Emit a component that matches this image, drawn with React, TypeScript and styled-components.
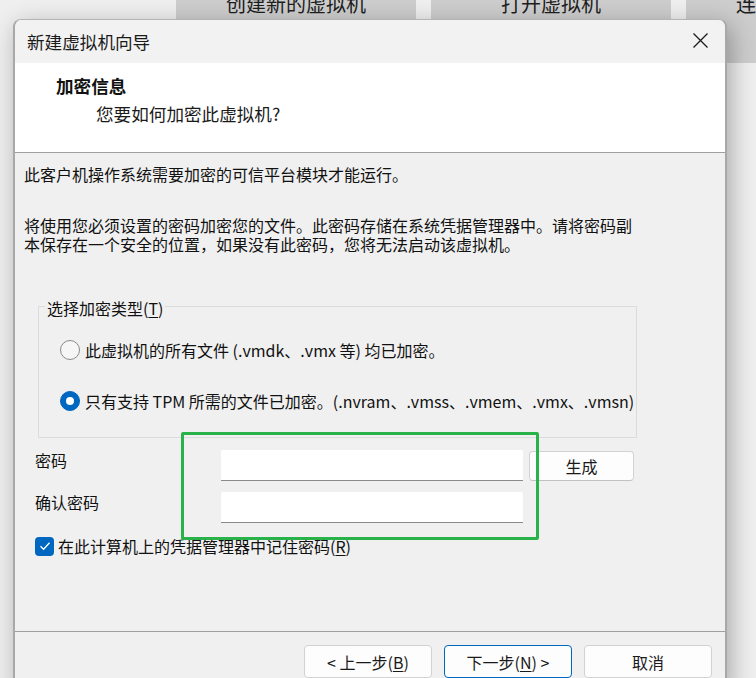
import React from "react";
import styled, { createGlobalStyle } from "styled-components";

const GlobalStyle = createGlobalStyle`
  * { box-sizing: border-box; }
  html, body { margin: 0; padding: 0; }
  body {
    width: 756px;
    height: 678px;
    overflow: hidden;
    background: #efefef;
    font-family: "Noto Sans CJK SC", "Noto Sans", sans-serif;
    color: #1a1a1a;
  }
`;

const Desktop = styled.div`
  position: relative;
  width: 756px;
  height: 678px;
  overflow: hidden;
  background: #efefef;
`;

const LauncherRow = styled.div`
  display: flex;
  gap: 15px;
  padding-left: 176px;
`;

const LauncherButton = styled.div`
  flex: none;
  width: 240px;
  height: 63px;
  background: #cdcdcd;
  text-align: center;
  font-size: 20px;
  line-height: 20px;
  color: #1e1e1e;
  white-space: nowrap;
  overflow: hidden;
`;

const LauncherLabel = styled.span`
  display: block;
  margin-top: -6px;
`;

const Dialog = styled.section`
  position: absolute;
  left: 13px;
  top: 19px;
  width: 714px;
  height: 672px;
  display: flex;
  flex-direction: column;
  background: #f0f0f0;
  border: 1px solid #b4b4b4;
  border-left: 2px solid #a8a8a8;
  border-right: 2px solid #a8a8a8;
  border-radius: 8px 8px 0 0;
  box-shadow: 4px 6px 24px rgba(0, 0, 0, 0.3);
`;

const TitleBar = styled.header`
  flex: none;
  height: 43px;
  display: flex;
  align-items: center;
  justify-content: space-between;
  padding: 0 17px 0 12px;
  background: #f2f2f2;
  border-radius: 7px 7px 0 0;
`;

const TitleText = styled.div`
  font-size: 17.6px;
  line-height: 24px;
  color: #1a1a1a;
`;

const CloseButton = styled.button`
  width: 15px;
  height: 15px;
  padding: 0;
  margin: -3px 0 0;
  border: none;
  background: transparent;
  display: flex;
`;

const PageHeader = styled.div`
  flex: none;
  height: 90px;
  padding: 11px 0 0 41px;
  background: #ffffff;
  border-bottom: 1px solid #a0a0a0;
`;

const PageTitle = styled.div`
  font-size: 17.6px;
  line-height: 24px;
  font-weight: 700;
  color: #111;
`;

const PageSubtitle = styled.div`
  margin-top: 4px;
  padding-left: 40px;
  font-size: 17.6px;
  line-height: 24px;
  color: #1a1a1a;
`;

const Body = styled.div`
  flex: 1;
  padding: 11px 9px 0;
  font-size: 16px;
  color: #111;
`;

const Paragraph = styled.p<{ $gap?: number }>`
  margin: ${(p) => p.$gap ?? 0}px 0 0;
  max-width: 612px;
  line-height: ${(p) => (p.$gap ? 19 : 20)}px;
`;

const GroupBox = styled.fieldset`
  margin: 40px 0 0 14px;
  width: 599px;
  min-width: 0;
  padding: 0 0 26px 6px;
  border: 1px solid #dcdcdc;
`;

const GroupLegend = styled.legend`
  padding: 4px 2px 0;
  line-height: 20px;
`;

const RadioRow = styled.label<{ $first?: boolean }>`
  display: flex;
  align-items: center;
  gap: 5px;
  height: 20px;
  margin: ${(p) => (p.$first ? 22 : 31)}px 0 0 15px;
  white-space: nowrap;
`;

const RadioMark = styled.span<{ $checked?: boolean }>`
  flex: none;
  width: 20px;
  height: 20px;
  border-radius: 50%;
  display: flex;
  align-items: center;
  justify-content: center;
  background: ${(p) => (p.$checked ? "#0067c0" : "#f6f6f6")};
  border: 1px solid ${(p) => (p.$checked ? "#0067c0" : "#8a8a8a")};

  &::after {
    content: "";
    display: ${(p) => (p.$checked ? "block" : "none")};
    width: 8px;
    height: 8px;
    border-radius: 50%;
    background: #ffffff;
  }
`;

const Accel = styled.span`
  text-decoration: underline;
  text-underline-offset: 2px;
`;

const FormGrid = styled.div`
  display: grid;
  grid-template-columns: 180px 302px 105px;
  column-gap: 6px;
  row-gap: 11px;
  margin-top: 12px;
  padding-left: 11px;
  align-items: start;
`;

const FieldLabel = styled.label`
  line-height: 20px;
`;

const TextInput = styled.input`
  width: 302px;
  height: 31px;
  margin: 0;
  padding: 0 8px;
  border: none;
  border-bottom: 1px solid #8a8a8a;
  border-radius: 2px 2px 0 0;
  background: #ffffff;
  outline: none;
`;

const PushButton = styled.button<{ $primary?: boolean; $w?: number; $h?: number }>`
  width: ${(p) => p.$w ?? 128}px;
  height: ${(p) => p.$h ?? 33}px;
  padding: 0;
  background: #fdfdfd;
  border: 1px solid ${(p) => (p.$primary ? "#0067c0" : "#d2d2d2")};
  border-radius: 4px;
  font-family: inherit;
  font-size: 16px;
  line-height: 20px;
  color: #1a1a1a;
  white-space: nowrap;
`;

const GenerateButton = styled(PushButton)`
  margin-top: 1px;
  border-bottom-color: #c2c2c2;
`;

const CheckRow = styled.label`
  display: flex;
  align-items: center;
  gap: 4px;
  margin-top: 13px;
  padding-left: 11px;
  line-height: 20px;
`;

const CheckMark = styled.span`
  flex: none;
  width: 19px;
  height: 19px;
  border-radius: 4px;
  background: #0067c0;
  display: flex;
  align-items: center;
  justify-content: center;
`;

const Footer = styled.footer`
  flex: none;
  display: flex;
  justify-content: flex-end;
  gap: 12px;
  padding: 13px 13px 12px;
  border-top: 1px solid #a0a0a0;
`;

/* green marker drawn around the password fields */
const Highlight = styled.div`
  position: absolute;
  left: 166px;
  top: 412px;
  width: 358px;
  height: 108px;
  border: 3px solid #29b24a;
  border-radius: 2px;
  pointer-events: none;
`;

export default function App() {
  return (
    <>
      <GlobalStyle />
      <Desktop>
        <LauncherRow>
          <LauncherButton>
            <LauncherLabel>创建新的虚拟机</LauncherLabel>
          </LauncherButton>
          <LauncherButton>
            <LauncherLabel>打开虚拟机</LauncherLabel>
          </LauncherButton>
          <LauncherButton>
            <LauncherLabel>连接远程服务器</LauncherLabel>
          </LauncherButton>
        </LauncherRow>

        <Dialog>
          <TitleBar>
            <TitleText>新建虚拟机向导</TitleText>
            <CloseButton aria-label="关闭">
              <svg width="15" height="15" viewBox="0 0 15 15">
                <path d="M0.5 0.5 L14.5 14.5 M14.5 0.5 L0.5 14.5" stroke="#1a1a1a" strokeWidth="1.3" fill="none" />
              </svg>
            </CloseButton>
          </TitleBar>

          <PageHeader>
            <PageTitle>加密信息</PageTitle>
            <PageSubtitle>您要如何加密此虚拟机?</PageSubtitle>
          </PageHeader>

          <Body>
            <Paragraph>此客户机操作系统需要加密的可信平台模块才能运行。</Paragraph>
            <Paragraph $gap={32}>
              将使用您必须设置的密码加密您的文件。此密码存储在系统凭据管理器中。请将密码副本保存在一个安全的位置，如果没有此密码，您将无法启动该虚拟机。
            </Paragraph>

            <GroupBox>
              <GroupLegend>
                选择加密类型(<Accel>T</Accel>)
              </GroupLegend>
              <RadioRow $first>
                <RadioMark />
                <span>此虚拟机的所有文件 (.vmdk、.vmx 等) 均已加密。</span>
              </RadioRow>
              <RadioRow>
                <RadioMark $checked />
                <span>只有支持 TPM 所需的文件已加密。(.nvram、.vmss、.vmem、.vmx、.vmsn)</span>
              </RadioRow>
            </GroupBox>

            <FormGrid>
              <FieldLabel htmlFor="pw">密码</FieldLabel>
              <TextInput id="pw" type="password" />
              <GenerateButton $w={105} $h={30}>生成</GenerateButton>
              <FieldLabel htmlFor="pw2">确认密码</FieldLabel>
              <TextInput id="pw2" type="password" />
            </FormGrid>

            <CheckRow>
              <CheckMark>
                <svg width="12" height="10" viewBox="0 0 12 10">
                  <path d="M1.5 5.2 L4.6 8.2 L10.5 1.8" stroke="#ffffff" strokeWidth="1.3" fill="none" />
                </svg>
              </CheckMark>
              <span>
                在此计算机上的凭据管理器中记住密码(<Accel>R</Accel>)
              </span>
            </CheckRow>
          </Body>

          <Footer>
            <PushButton>
              &lt; 上一步(<Accel>B</Accel>)
            </PushButton>
            <PushButton $primary>
              下一步(<Accel>N</Accel>) &gt;
            </PushButton>
            <PushButton>取消</PushButton>
          </Footer>

          <Highlight />
        </Dialog>
      </Desktop>
    </>
  );
}
